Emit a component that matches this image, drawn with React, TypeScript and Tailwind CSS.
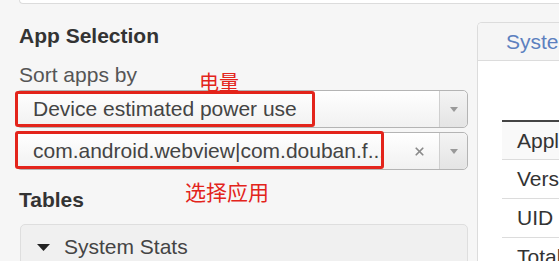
import { X } from "lucide-react";

function Caret({ className = "" }: { className?: string }) {
  return (
    <svg width="8" height="5" viewBox="0 0 8 5" className={className}>
      <path d="M0 0h8L4 5z" fill="currentColor" />
    </svg>
  );
}

function SelectBox({
  label,
  clearable = false,
}: {
  label: string;
  clearable?: boolean;
}) {
  return (
    <div className="flex h-[38px] w-full items-stretch rounded-[5px] border border-[#b4b4b4] bg-gradient-to-b from-white to-[#f1f1f1]">
      <div className="flex min-w-0 flex-1 items-center pl-[16px] pr-[6px]">
        <span className="min-w-0 flex-1 truncate text-[21px] leading-[24px] text-[#444]">
          {label}
        </span>
        {clearable && (
          <X className="mr-[7px] text-[#8a8a8a]" size={13} strokeWidth={3.2} />
        )}
      </div>
      <div className="flex w-[28px] items-center justify-center rounded-r-[5px] border-l border-[#cfcfcf] bg-gradient-to-b from-[#f4f4f4] to-[#e4e4e4]">
        <Caret className="text-[#999]" />
      </div>
    </div>
  );
}

export default function App() {
  return (
    <div className="relative h-[261px] w-[559px] overflow-hidden bg-[#f6f6f6] font-['Liberation_Sans',Arial,sans-serif]">
      <div className="ml-[19px] h-[4px] rounded-bl-[4px] border-b border-l border-[#dcdcdc] bg-white" />

      <div className="flex items-start">
        <div className="ml-[16px] flex w-[452px] shrink-0 flex-col">
          <h2 className="mt-[20px] pl-[3px] text-[21px] font-bold leading-[24px] text-[#333]">
            App Selection
          </h2>
          <label className="mt-[15px] pl-[3px] text-[21px] leading-[24px] text-[#555]">
            Sort apps by
          </label>
          <div className="mt-[3px]">
            <SelectBox label="Device estimated power use" />
          </div>
          <div className="mt-[4px]">
            <SelectBox
              label="com.android.webview|com.douban.f..."
              clearable
            />
          </div>
          <h2 className="mt-[18px] pl-[3px] text-[21px] font-bold leading-[24px] text-[#333]">
            Tables
          </h2>
          <div className="ml-[4px] mt-[12px] h-[60px] rounded-t-[5px] border border-[#dedede] bg-[#f0f0f0]">
            <div className="flex h-[44px] items-center gap-[14px] pl-[16px]">
              <svg width="13" height="7" viewBox="0 0 13 7" className="text-[#222]">
                <path d="M0 0h13L6.5 7z" fill="currentColor" />
              </svg>
              <span className="text-[21px] leading-[24px] text-[#444]">
                System Stats
              </span>
            </div>
          </div>
        </div>

        <div className="ml-[9px] mt-[18px] h-[260px] min-w-0 flex-1 overflow-hidden rounded-tl-[5px] border-l border-t border-[#dcdcdc] bg-white">
          <div className="flex h-[38px] items-center border-b border-[#dcdcdc] bg-[#f5f5f5] pl-[28px]">
            <span className="whitespace-nowrap text-[21px] leading-[24px] text-[#5c80bf]">
              System Stats
            </span>
          </div>
          <div className="pl-[24px]">
            <div className="h-[61px] border-b-2 border-[#444]" />
            {["Application", "Version", "UID", "Total"].map((cell, i) => (
              <div
                key={cell}
                className={`flex items-center border-b border-[#dcdcdc] pl-[15px] text-[21px] leading-[24px] text-[#333] whitespace-nowrap ${
                  i === 0 ? "h-[38px] bg-[#f9f9f9]" : "h-[39px] bg-white"
                }`}
              >
                {cell}
              </div>
            ))}
          </div>
        </div>
      </div>

      <div className="absolute left-[15px] top-[91px] h-[36px] w-[300px] rounded-[3px] border-[3px] border-[#e3241b]" />
      <div className="absolute left-[15px] top-[131px] h-[38px] w-[369px] rounded-[3px] border-[3px] border-[#e3241b]" />
      <span className="absolute left-[199px] top-[70px] text-[20px] leading-[24px] text-[#e3241b] font-['Noto_Sans_CJK_SC',sans-serif]">
        电量
      </span>
      <span className="absolute left-[185px] top-[179px] text-[21px] leading-[24px] text-[#e3241b] font-['Noto_Sans_CJK_SC',sans-serif]">
        选择应用
      </span>
    </div>
  );
}
